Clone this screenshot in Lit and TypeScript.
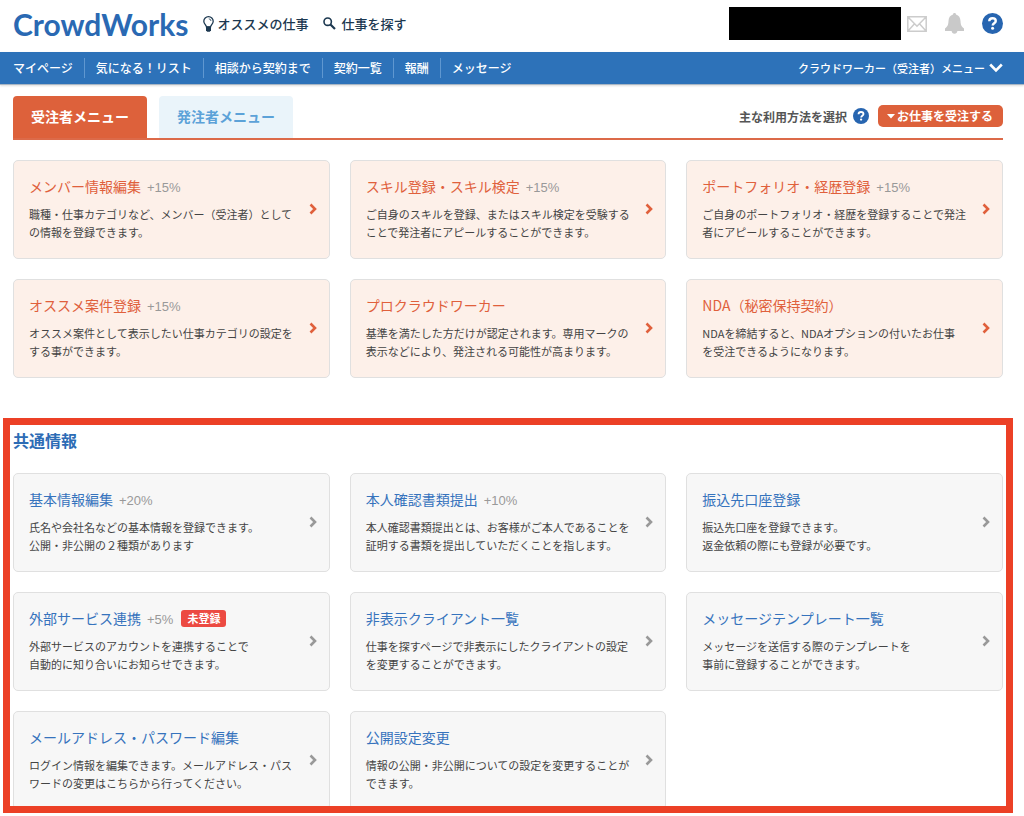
import { LitElement, html, svg, css, nothing } from "lit";
import { customElement, property } from "lit/decorators.js";

interface MenuItem {
  title: string;
  lines: string[];
  rate?: string;
  badge?: string;
}

const NAV = ["マイページ", "気になる！リスト", "相談から契約まで", "契約一覧", "報酬", "メッセージ"];

const WORKER_ITEMS: MenuItem[] = [
  { title: "メンバー情報編集", rate: "+15%", lines: ["職種・仕事カテゴリなど、メンバー（受注者）として", "の情報を登録できます。"] },
  { title: "スキル登録・スキル検定", rate: "+15%", lines: ["ご自身のスキルを登録、またはスキル検定を受験する", "ことで発注者にアピールすることができます。"] },
  { title: "ポートフォリオ・経歴登録", rate: "+15%", lines: ["ご自身のポートフォリオ・経歴を登録することで発注", "者にアピールすることができます。"] },
  { title: "オススメ案件登録", rate: "+15%", lines: ["オススメ案件として表示したい仕事カテゴリの設定を", "する事ができます。"] },
  { title: "プロクラウドワーカー", lines: ["基準を満たした方だけが認定されます。専用マークの", "表示などにより、発注される可能性が高まります。"] },
  { title: "NDA（秘密保持契約）", lines: ["NDAを締結すると、NDAオプションの付いたお仕事", "を受注できるようになります。"] },
];

const COMMON_ITEMS: MenuItem[] = [
  { title: "基本情報編集", rate: "+20%", lines: ["氏名や会社名などの基本情報を登録できます。", "公開・非公開の２種類があります"] },
  { title: "本人確認書類提出", rate: "+10%", lines: ["本人確認書類提出とは、お客様がご本人であることを", "証明する書類を提出していただくことを指します。"] },
  { title: "振込先口座登録", lines: ["振込先口座を登録できます。", "返金依頼の際にも登録が必要です。"] },
  { title: "外部サービス連携", rate: "+5%", badge: "未登録", lines: ["外部サービスのアカウントを連携することで", "自動的に知り合いにお知らせできます。"] },
  { title: "非表示クライアント一覧", lines: ["仕事を探すページで非表示にしたクライアントの設定", "を変更することができます。"] },
  { title: "メッセージテンプレート一覧", lines: ["メッセージを送信する際のテンプレートを", "事前に登録することができます。"] },
  { title: "メールアドレス・パスワード編集", lines: ["ログイン情報を編集できます。メールアドレス・パス", "ワードの変更はこちらから行ってください。"] },
  { title: "公開設定変更", lines: ["情報の公開・非公開についての設定を変更することが", "できます。"] },
];

const helpIcon = (size: number) => html`
  <svg width=${size} height=${size} viewBox="0 0 20 20" aria-hidden="true">
    <circle cx="10" cy="10" r="10" fill="#2765b0" />
    ${svg`<path d="M6.9 7.8C7 5.9 8.2 5 10 5c1.900 0 3.100 1 3.100 2.500 0 2.200-2.900 2.200-2.900 4.300" fill="none" stroke="#fff" stroke-width="2.300" />
    <circle cx="10.100" cy="14.500" r="1.450" fill="#fff" />`}
  </svg>`;

@customElement("menu-card")
export class MenuCard extends LitElement {
  @property({ attribute: false }) item!: MenuItem;
  @property() tone: "worker" | "common" = "common";

  static styles = css`
    :host { display: block; min-width: 0; }
    .card {
      display: flex;
      align-items: center;
      gap: 8px;
      box-sizing: border-box;
      height: 100%;
      padding: 15px 12px 17px 15px;
      border: 1px solid #e0e0e0;
      border-radius: 5px;
      background: #f7f7f7;
      color: #444;
      text-decoration: none;
    }
    .worker { background: #fdf0e9; }
    .body { flex: 1; min-width: 0; }
    .head {
      display: flex;
      align-items: baseline;
      gap: 6px;
      height: 20px;
      margin-bottom: 9px;
    }
    .title { margin: 0; font-size: 14px; line-height: 20px; font-weight: 400; color: #3673bd; white-space: nowrap; }
    .worker .title { color: #e0603c; }
    .rate { font: 13px/20px "Liberation Sans", sans-serif; color: #999; }
    .badge {
      align-self: center;
      margin-left: 2px;
      padding: 0 6px;
      border-radius: 3px;
      background: #ec4a42;
      color: #fff;
      font-size: 11px;
      line-height: 17px;
      font-weight: 700;
    }
    .text { margin: 0; font-size: 11px; line-height: 18px; white-space: nowrap; }
    .arrow { flex: none; color: #999; }
    .worker .arrow { color: #e0603c; }
  `;

  render() {
    const { title, rate, badge, lines } = this.item;
    return html`
      <a class="card ${this.tone}" href="#">
        <div class="body">
          <div class="head">
            <h3 class="title">${title}</h3>
            ${rate ? html`<span class="rate">${rate}</span>` : nothing}
            ${badge ? html`<span class="badge">${badge}</span>` : nothing}
          </div>
          <p class="text">${lines.map((l, i) => (i ? html`<br />${l}` : l))}</p>
        </div>
        <svg class="arrow" width="8" height="12" viewBox="0 0 8 12" aria-hidden="true">
          <path d="M1.500 1.500 6 6 1.500 10.500" fill="none" stroke="currentColor" stroke-width="2.600" />
        </svg>
      </a>`;
  }
}

@customElement("app-root")
export class AppRoot extends LitElement {
  static styles = css`
    :host {
      display: flex;
      flex-direction: column;
      height: 100vh;
      overflow: hidden;
      background: #fff;
      font-family: "Noto Sans CJK JP", sans-serif;
      color: #444;
    }
    a { color: inherit; text-decoration: none; }
    svg { display: block; flex: none; }
    .header {
      display: flex;
      align-items: center;
      flex: none;
      height: 52px;
      padding: 0 21px 5px 13px;
      box-sizing: border-box;
      color: #1c3850;
      font-size: 13px;
      font-weight: 500;
    }
    .logo {
      margin-right: 14px;
      font: 700 30px/44px Lato, sans-serif;
      color: #2a69b3;
    }
    .quick { display: flex; align-items: center; gap: 4px; margin-right: 14px; white-space: nowrap; }
    .quick.search { gap: 6px; }
    .tools { display: flex; align-items: center; gap: 18px; margin-left: auto; }
    .account { display: flex; align-items: center; gap: 6px; }
    .mask { width: 172px; height: 33px; background: #000; }
    .icon-button { padding: 0; border: 0; background: none; cursor: pointer; }
    .nav {
      display: flex;
      align-items: center;
      justify-content: space-between;
      flex: none;
      height: 33px;
      padding: 0 21px 0 13px;
      background: #2d72b9;
      border-bottom: 1px solid #a9b6c4;
      box-sizing: border-box;
      box-shadow: 0 1px 2px #ddd;
      color: #fff;
      font-size: 12px;
      font-weight: 500;
      white-space: nowrap;
    }
    .links { display: flex; margin: 0; padding: 0; list-style: none; line-height: 20px; }
    .links li { padding: 0 11px; border-left: 1px solid #5f97d0; }
    .links li:first-child { padding-left: 0; border-left: 0; }
    .role {
      display: flex;
      align-items: center;
      gap: 4px;
      padding: 0;
      border: 0;
      background: none;
      color: #fff;
      font: 500 11px/20px "Noto Sans CJK JP", sans-serif;
    }
    .main {
      display: flex;
      flex-direction: column;
      flex: 1;
      min-height: 0;
      padding: 11px 21px 3px 13px;
    }
    .bar {
      display: flex;
      justify-content: space-between;
      flex: none;
      border-bottom: 2px solid #dc6a49;
      margin-bottom: 20px;
    }
    .tabs { display: flex; gap: 12px; }
    .tab {
      padding: 0 18px 2px;
      border-radius: 4px 4px 0 0;
      background: #eaf4fa;
      color: #5ca2d8;
      font-size: 14px;
      line-height: 40px;
      font-weight: 700;
      white-space: nowrap;
    }
    .tab.active { background: #dd613b; color: #fff; }
    .usage {
      display: flex;
      align-items: center;
      gap: 6px;
      height: 40px;
      font-size: 12px;
      font-weight: 700;
      color: #555;
      white-space: nowrap;
    }
    .picker {
      display: flex;
      align-items: center;
      gap: 2px;
      margin-left: 3px;
      padding: 0 9px;
      border-radius: 5px;
      background: #dd613b;
    }
    .select {
      appearance: none;
      padding: 0;
      border: 0;
      background: transparent;
      color: #fff;
      font: 700 12px/22px "Noto Sans CJK JP", sans-serif;
      height: 22px;
    }
    .grid {
      display: grid;
      grid-template-columns: repeat(3, minmax(0, 1fr));
      gap: 20px;
      flex: none;
    }
    .common {
      flex: 1;
      min-height: 0;
      margin: 40px -10px 0;
      padding: 3px;
      border: 7px solid #ec4026;
      overflow: hidden;
      box-sizing: border-box;
    }
    .heading { margin: 0 0 21px; font-size: 16px; line-height: 24px; font-weight: 700; color: #2d6cb5; }
  `;

  private grid(items: MenuItem[], tone: string) {
    return html`<div class="grid">
      ${items.map((item) => html`<menu-card .item=${item} tone=${tone}></menu-card>`)}
    </div>`;
  }

  render() {
    return html`
      <header class="header">
        <a class="logo" href="#">CrowdWorks</a>
        <a class="quick" href="#">
          <svg width="11" height="16" viewBox="0 0 11 16" aria-hidden="true">
            <path d="M3.500 11C3.300 9 .8 7.900 .8 5.200a4.700 4.500 0 0 1 9.400 0C10.200 7.900 7.700 9 7.500 11Z" fill="none" stroke="#1c3850" stroke-width="1.300" />
            <path d="M5.800 2.800a2.400 2.400 0 0 1 2.200 2.200" fill="none" stroke="#1c3850" stroke-width=".8" />
            <path d="M3 10.500h5v3.700L6.800 15.800H4.200L3 14.200Z" fill="#1c3850" />
          </svg>
          <span>オススメの仕事</span>
        </a>
        <a class="quick search" href="#">
          <svg width="13" height="13" viewBox="0 0 13 13" aria-hidden="true">
            <circle cx="4.700" cy="4.700" r="3.700" fill="none" stroke="#1c3850" stroke-width="1.600" />
            <path d="m7.500 7.500 4.500 4.500" stroke="#1c3850" stroke-width="2.200" />
          </svg>
          <span>仕事を探す</span>
        </a>
        <div class="tools">
          <div class="account">
            <div class="mask"></div>
            <button class="icon-button" aria-label="メッセージ">
              <svg width="20" height="16" viewBox="0 0 20 16">
                <path d="M.8.8h18.400v14.400H.8ZM1 1l9 9.200L19 1M1 15l6.300-7M19 15l-6.300-7" fill="none" stroke="#ccc" stroke-width="1.500" />
              </svg>
            </button>
          </div>
          <button class="icon-button" aria-label="お知らせ">
            <svg width="19" height="21" viewBox="0 0 19 21">
              <path d="M9.500 0c1 0 1.500.7 1.500 1.600C14 2.400 15.300 4.800 15.500 8c.2 4 .9 5.600 3.500 7.500V18H0v-2.500C2.600 13.600 3.300 12 3.500 8 3.700 4.800 5 2.400 8 1.600 8 .7 8.500 0 9.500 0ZM6.500 17.500h6c-.3 2.300-1.400 3.200-3 3.200s-2.700-.9-3-3.200Z" fill="#c9c9c9" />
            </svg>
          </button>
          <button class="icon-button" aria-label="ヘルプ">${helpIcon(21)}</button>
        </div>
      </header>

      <nav class="nav">
        <ul class="links">
          ${NAV.map((label) => html`<li><a href="#">${label}</a></li>`)}
        </ul>
        <button class="role">
          <span>クラウドワーカー（受注者）メニュー</span>
          <svg width="14" height="10" viewBox="0 0 14 10" aria-hidden="true">
            <path d="m1.200 1.500 5.800 6 5.800-6" fill="none" stroke="#fff" stroke-width="2.600" />
          </svg>
        </button>
      </nav>

      <main class="main">
        <div class="bar">
          <div class="tabs">
            <a class="tab active" href="#">受注者メニュー</a>
            <a class="tab" href="#">発注者メニュー</a>
          </div>
          <div class="usage">
            <label for="usage">主な利用方法を選択</label>
            ${helpIcon(16)}
            <div class="picker">
              <svg width="8" height="5" viewBox="0 0 8 5" aria-hidden="true"><path d="M0 0h8L4 4.500Z" fill="#fff" /></svg>
              <select class="select" id="usage">
                <option>お仕事を受注する</option>
              </select>
            </div>
          </div>
        </div>
        ${this.grid(WORKER_ITEMS, "worker")}
        <section class="common">
          <h2 class="heading">共通情報</h2>
          ${this.grid(COMMON_ITEMS, "common")}
        </section>
      </main>`;
  }
}
